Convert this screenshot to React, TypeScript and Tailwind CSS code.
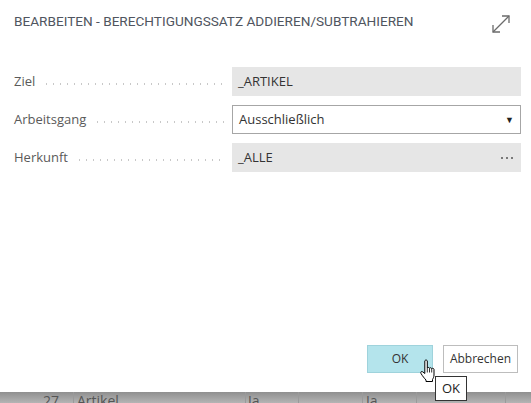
import React from "react";

function Leader() {
  return (
    <div className="flex-1 ml-[8px] mr-[6px] self-center h-[2px] mt-[4px] bg-[radial-gradient(circle,#c8c8c8_0.8px,transparent_1px)] bg-[length:7px_2px]" />
  );
}

function Row({ label, children }: { label: string; children: React.ReactNode }) {
  return (
    <div className="flex items-center h-[29px]">
      <div className="w-[218px] shrink-0 flex items-center text-[13px] text-[#5a5a5a]">
        <span>{label}</span>
        <Leader />
      </div>
      <div className="w-[289px] shrink-0">{children}</div>
    </div>
  );
}

export default function App() {
  return (
    <div
      className="w-[531px] h-[403px] relative overflow-hidden bg-[#b3b3b3]"
      style={{ fontFamily: '"Open Sans", "Noto Sans", sans-serif' }}
    >
      <div className="absolute left-0 right-0 top-[392px] h-[11px] bg-gradient-to-b from-[#8f8f8f] to-[#b4b4b4]">
        <div className="relative w-full h-full text-[14px] text-[#555] leading-none">
          <div className="absolute left-[73px] top-0 bottom-0 w-px bg-[#9a9a9a]" />
          <div className="absolute left-[245px] top-0 bottom-0 w-px bg-[#9a9a9a]" />
          <div className="absolute left-[298px] top-0 bottom-0 w-px bg-[#9a9a9a]" />
          <div className="absolute left-[362px] top-0 bottom-0 w-px bg-[#9a9a9a]" />
          <div className="absolute left-[416px] top-0 bottom-0 w-px bg-[#9a9a9a]" />
          <div className="absolute left-[505px] top-0 bottom-0 w-px bg-[#9a9a9a]" />
          <span className="absolute left-[43px] top-[2px]">27</span>
          <span className="absolute left-[77px] top-[2px]">Artikel</span>
          <span className="absolute left-[248px] top-[2px]">Ja</span>
          <span className="absolute left-[366px] top-[2px]">Ja</span>
        </div>
      </div>

      <div className="w-[531px] h-[392px] bg-white flex flex-col pl-[14px] pr-[10px]">
        <div className="flex items-start justify-between pt-[11px] h-[55px]">
          <div
            className="text-[13.6px] text-[#505560] leading-[20px]"
            style={{ fontFamily: 'Roboto, "Liberation Sans", sans-serif' }}
          >
            BEARBEITEN - BERECHTIGUNGSSATZ ADDIEREN/SUBTRAHIEREN
          </div>
          <svg width="20" height="20" viewBox="0 0 20 20" className="mt-[3px] mr-[10px]" fill="none" stroke="#6b6b6b" strokeWidth="1.3">
            <path d="M2 18 L18 2" />
            <path d="M11 2 H18 V9" />
            <path d="M2 11 V18 H9" />
          </svg>
        </div>

        <div className="flex flex-col gap-[9px] mt-[12px]">
          <Row label="Ziel">
            <div className="h-[29px] bg-[#e6e6e6] flex items-center px-[6px] text-[13px] text-[#333]">
              _ARTIKEL
            </div>
          </Row>
          <Row label="Arbeitsgang">
            <div className="h-[29px] bg-white border border-[#a6a6a6] flex items-center justify-between pl-[6px] pr-[6px] text-[13px] text-[#333]">
              <span>Ausschließlich</span>
              <span className="text-[9px] text-[#222]">▼</span>
            </div>
          </Row>
          <Row label="Herkunft">
            <div className="h-[29px] bg-[#e6e6e6] flex items-center justify-between px-[6px] text-[13px] text-[#333]">
              <span>_ALLE</span>
              <span className="flex gap-[3px] mr-[2px]">
                <span className="w-[2px] h-[2px] bg-[#555] rounded-full" />
                <span className="w-[2px] h-[2px] bg-[#555] rounded-full" />
                <span className="w-[2px] h-[2px] bg-[#555] rounded-full" />
              </span>
            </div>
          </Row>
        </div>

        <div className="flex-1" />
        <div className="flex justify-end gap-[10px] pb-[19px] pr-[3px]">
          <div className="w-[66px] h-[28px] bg-[#b4e4ec] border border-[#9fd3dc] flex items-center justify-center text-[12px] text-[#333]">
            OK
          </div>
          <div className="w-[75px] h-[28px] bg-white border border-[#bdbdbd] flex items-center justify-center text-[12px] text-[#333]">
            Abbrechen
          </div>
        </div>
      </div>

      <div className="absolute left-[435px] top-[376px] w-[32px] h-[25px] bg-white border border-[#333] flex items-center justify-center text-[13px] text-[#222]">
        OK
      </div>

      <svg className="absolute left-[419px] top-[359px]" width="20" height="24" viewBox="0 0 20 24">
        <path
          d="M6 1.5 C6.8 0.7 8 0.9 8.3 2 L8.3 9 C8.6 8.2 10.3 8.2 10.5 9.3 C10.9 8.4 12.5 8.6 12.7 9.7 C13.2 9 14.8 9.2 15 10.4 L15 16 C15 18 14 19.5 13.5 20.5 L13.5 22.5 L7 22.5 L7 21 C5.5 19.5 3.5 17 2 14.5 C1.2 13 2.5 12 3.7 12.8 L5.8 14.5 L5.8 2 Z"
          fill="white"
          stroke="black"
          strokeWidth="1"
          strokeLinejoin="round"
        />
        <path d="M10.5 9.5 V13.5 M12.7 10 V13.5 M8.3 9 V13.5" stroke="black" strokeWidth="0.8" />
      </svg>
    </div>
  );
}
